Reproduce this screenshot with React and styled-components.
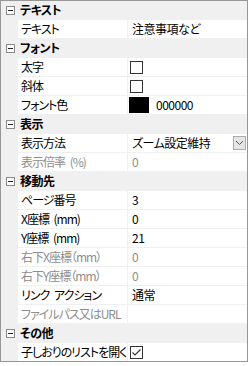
import React from "react";
import styled, { createGlobalStyle } from "styled-components";

const GlobalStyle = createGlobalStyle`
    body {
        margin: 0;
        background: #ffffff;
        font-family: "Noto Sans CJK JP", "Noto Sans", sans-serif;
        font-feature-settings: "palt";
    }
`;

const sections = [
    {
        title: "テキスト",
        items: [{ label: "テキスト", value: "注意事項など" }],
    },
    {
        title: "フォント",
        items: [
            { label: "太字", type: "check", checked: false },
            { label: "斜体", type: "check", checked: false },
            { label: "フォント色", type: "color", color: "#000000", value: "000000" },
        ],
    },
    {
        title: "表示",
        items: [
            { label: "表示方法", type: "select", value: "ズーム設定維持" },
            { label: "表示倍率 (%)", value: "0", disabled: true },
        ],
    },
    {
        title: "移動先",
        items: [
            { label: "ページ番号", value: "3" },
            { label: "X座標 (mm)", value: "0" },
            { label: "Y座標 (mm)", value: "21" },
            { label: "右下X座標（mm）", value: "0", disabled: true },
            { label: "右下Y座標（mm）", value: "0", disabled: true },
            { label: "リンク アクション", value: "通常" },
            { label: "ファイルパス又はURL", value: "", disabled: true },
        ],
    },
    {
        title: "その他",
        items: [{ label: "子しおりのリストを開く", type: "check", checked: true }],
    },
];

const Collapse = () => (
    <CollapseBox>
        <svg width="9" height="9" viewBox="0 0 9 9">
            <rect x="0.5" y="0.5" width="8" height="8" fill="#fff" stroke="#8a8a8a" />
            <line x1="2" y1="4.5" x2="7" y2="4.5" stroke="#222" />
        </svg>
    </CollapseBox>
);

const CheckBox = ({ checked }) => (
    <Check>
        <svg width="13" height="13" viewBox="0 0 13 13">
            <rect x="0.5" y="0.5" width="12" height="12" fill="#fff" stroke="#333" />
            {checked && (
                <polyline points="2.5,6.5 5,9 10.5,3.5" fill="none" stroke="#333" strokeWidth="1.2" />
            )}
        </svg>
    </Check>
);

const renderValue = (item) => {
    if (item.type === "check") return <CheckBox checked={item.checked} />;
    if (item.type === "color")
        return (
            <>
                <Swatch $color={item.color} />
                <ValueText>{item.value}</ValueText>
            </>
        );
    if (item.type === "select")
        return (
            <>
                <ValueText>{item.value}</ValueText>
                <DropButton>
                    <svg width="9" height="6" viewBox="0 0 9 6">
                        <polyline points="1,1 4.5,4.5 8,1" fill="none" stroke="#555" />
                    </svg>
                </DropButton>
            </>
        );
    return <ValueText $disabled={item.disabled}>{item.value}</ValueText>;
};

export default function App() {
    return (
        <>
            <GlobalStyle />
            <Panel>
                {sections.map((section) => (
                    <React.Fragment key={section.title}>
                        <Header>
                            <Gutter>
                                <Collapse />
                            </Gutter>
                            <HeaderTitle>{section.title}</HeaderTitle>
                        </Header>
                        {section.items.map((item) => (
                            <Row key={item.label}>
                                <Gutter />
                                <Label $disabled={item.disabled}>{item.label}</Label>
                                <Value>{renderValue(item)}</Value>
                            </Row>
                        ))}
                    </React.Fragment>
                ))}
            </Panel>
        </>
    );
}

const Panel = styled.div`
    width: 246px;
    border: 1px solid #979797;
    background: #f0f0f0;
    display: flex;
    flex-direction: column;
    gap: 1px;
    font-size: 12px;
    color: #000;
`;

const Header = styled.div`
    display: flex;
    align-items: center;
    height: 18px;
`;

const Gutter = styled.div`
    width: 16px;
    flex: none;
    display: flex;
    align-items: center;
    justify-content: center;
    align-self: stretch;
`;

const CollapseBox = styled.span`
    display: flex;
    margin-left: 2px;
`;

const HeaderTitle = styled.span`
    font-weight: bold;
    padding-left: 3px;
    line-height: 18px;
    letter-spacing: -0.5px;
`;

const Row = styled.div`
    display: flex;
    height: 18px;
    gap: 1px;
`;

const Label = styled.div`
    width: 106px;
    flex: none;
    background: #fff;
    padding-left: 3px;
    line-height: 18px;
    white-space: nowrap;
    overflow: hidden;
    letter-spacing: -1px;
    word-spacing: 3px;
    color: ${(p) => (p.$disabled ? "#8d8d8d" : "#000")};
`;

const Value = styled.div`
    flex: 1;
    background: #fff;
    display: flex;
    align-items: center;
    padding-left: 1px;
    padding-right: 1px;
    white-space: nowrap;
    overflow: hidden;
`;

const ValueText = styled.span`
    flex: 1;
    padding-left: 3px;
    line-height: 18px;
    letter-spacing: -0.5px;
    color: ${(p) => (p.$disabled ? "#8d8d8d" : "#000")};
`;

const Check = styled.span`
    display: flex;
    margin-left: 1px;
`;

const Swatch = styled.span`
    width: 20px;
    height: 16px;
    flex: none;
    background: ${(p) => p.$color};
    margin-right: 4px;
`;

const DropButton = styled.span`
    width: 11px;
    height: 12px;
    flex: none;
    display: flex;
    align-items: center;
    justify-content: center;
    background: #e5e5e5;
    border: 1px solid #acacac;
`;
